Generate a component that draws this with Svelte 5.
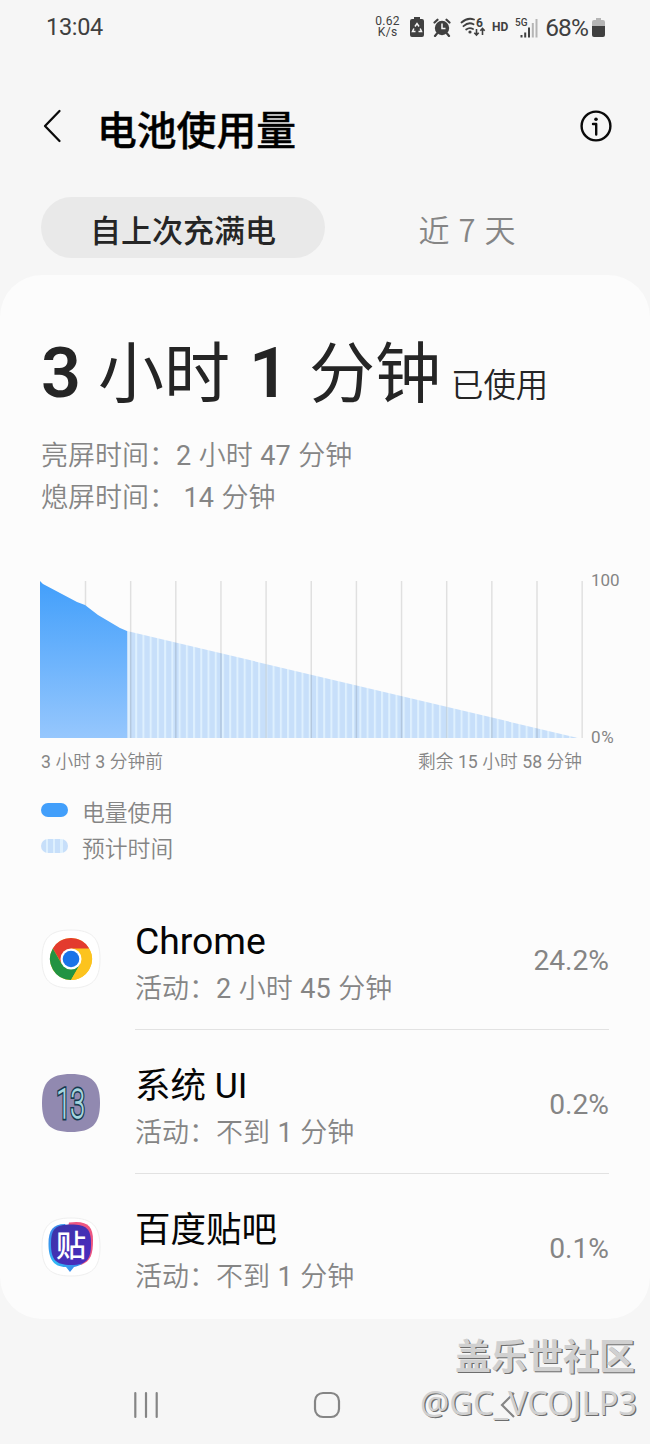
<script>
  const gridLines = Array.from({ length: 12 }, (_, i) => 45.5 + i * 45.15);
  const apps = [
    { id: 'chrome', name: 'Chrome', time: '活动：2 小时 45 分钟', share: '24.2%' },
    { id: 'system', name: '系统 UI', time: '活动：不到 1 分钟', share: '0.2%' },
    { id: 'tieba', name: '百度贴吧', time: '活动：不到 1 分钟', share: '0.1%' }
  ];
  const parts = (text) => text.split(/(\d+)/).filter(Boolean);
</script>

{#snippet mixed(text)}{#each parts(text) as part}<span class:digits={/^\d/.test(part)}>{part}</span>{/each}{/snippet}

<div class="screen">
  <header class="status">
    <span class="clock">13:04</span>
    <div class="indicators">
      <span class="rate"><span>0.62</span><span>K/s</span></span>
      <svg class="saver" width="14" height="20" viewBox="0 0 14 20">
        <path d="M4 0h6v2h2a2 2 0 0 1 2 2v14a2 2 0 0 1-2 2H2a2 2 0 0 1-2-2V4a2 2 0 0 1 2-2h2z" fill="#404040" />
        <path d="M5 9.500 7 6.500l2 3M10.200 11.500l1.300 3H8.500M5.500 14.500h-3l1.400-3" fill="none" stroke="#f6f6f6" stroke-width="1.500" />
      </svg>
      <svg class="alarm" width="18" height="19" viewBox="0 0 18 19">
        <circle cx="9" cy="10" r="7.200" fill="#404040" />
        <path d="M1.500 4.500 4.500 1.700M16.500 4.500 13.500 1.700M4 15.500 2 18M14 15.500l2 2.500" stroke="#404040" stroke-width="2.200" stroke-linecap="round" />
        <path d="M9 5.500V10.500H12.500" fill="none" stroke="#f6f6f6" stroke-width="1.500" />
      </svg>
      <svg class="wifi" width="27" height="20" viewBox="0 0 27 20">
        <g fill="none" stroke="#404040" stroke-width="1.800" stroke-linecap="round">
          <path d="M1.500 5.500Q7.500 0 14 2.500M3.500 9.200Q8.500 4.500 13.500 7.200M6.200 12.500Q9.500 10 13 12" />
        </g>
        <circle cx="10" cy="15" r="1.600" fill="#404040" />
        <text x="16" y="10" font-size="12" font-weight="700" fill="#404040">6</text>
        <path d="M16.500 12v6m-2.200-2.300 2.200 2.300 2.200-2.300M22.500 18v-6.500m-2.200 2.300 2.200-2.300 2.200 2.300" fill="none" stroke="#404040" stroke-width="1.600" />
      </svg>
      <span class="hd">HD</span>
      <svg class="signal" width="24" height="21" viewBox="0 0 24 21">
        <text x="0" y="8.500" font-size="10" font-weight="500" fill="#404040">5G</text>
        <path d="M6.500 18v2.500M10.200 15.500v5M14 10.500v10" stroke="#404040" stroke-width="2" />
        <path d="M17.800 6v14.500M21.500 2v18.500" stroke="#b5b5b5" stroke-width="2" />
      </svg>
      <span class="percent">68%</span>
      <svg class="battery" width="13" height="19" viewBox="0 0 13 19">
        <path d="M4 0h5v2h2a2 2 0 0 1 2 2v4H0V4a2 2 0 0 1 2-2h2z" fill="#b5b5b5" />
        <path d="M0 8h13v9a2 2 0 0 1-2 2H2a2 2 0 0 1-2-2z" fill="#404040" />
      </svg>
    </div>
  </header>

  <div class="titlebar">
    <svg class="back" width="20" height="34" viewBox="0 0 20 34">
      <path d="M17.500 2 3 17 17.500 32" fill="none" stroke="#0a0a0a" stroke-width="2.300" stroke-linecap="round" stroke-linejoin="round" />
    </svg>
    <h1>电池使用量</h1>
    <svg class="info" width="32" height="32" viewBox="0 0 32 32">
      <circle cx="16" cy="16" r="14.400" fill="none" stroke="#0a0a0a" stroke-width="2.400" />
      <circle cx="16" cy="9.300" r="1.800" fill="#0a0a0a" />
      <path d="M13 14h3.200v10.500" fill="none" stroke="#0a0a0a" stroke-width="2.400" stroke-linecap="round" stroke-linejoin="round" />
    </svg>
  </div>

  <nav class="tabs">
    <span class="tab active">自上次充满电</span>
    <span class="tab">近 7 天</span>
  </nav>

  <main class="card">
    <div class="total">
      <b>3</b><span class="unit">小时</span><b class="minutes">1</b><span class="unit">分钟</span><span class="used">已使用</span>
    </div>
    <p class="detail">{@render mixed('亮屏时间：2 小时 47 分钟')}</p>
    <p class="detail">{@render mixed('熄屏时间： 14 分钟')}</p>

    <div class="chart">
      <svg width="544" height="158" viewBox="0 0 544 158">
        <defs>
          <linearGradient id="usage" x1="0" y1="0" x2="0" y2="1">
            <stop offset="0" stop-color="#429ffb" />
            <stop offset="1" stop-color="#96c7fd" />
          </linearGradient>
          <pattern id="stripes" x="88" y="0" width="7.230" height="10" patternUnits="userSpaceOnUse">
            <rect width="7.230" height="10" fill="#c7dffa" />
            <rect width="2" height="10" fill="#def0fe" />
          </pattern>
        </defs>
        <polygon points="87,50 538,157 87,157" fill="url(#stripes)" />
        <g stroke="#000" stroke-opacity="0.110" stroke-width="1.500">
          {#each gridLines as x}
            <line x1={x} x2={x} y1="0" y2="157" />
          {/each}
        </g>
        <polygon points="0,0 3,3 37,21 45,24 58,34 80,47 87,50 87,157 0,157" fill="url(#usage)" />
      </svg>
      <div class="scale"><span>100</span><span class="zero">0%</span></div>
    </div>
    <div class="range">
      <div>{@render mixed('3 小时 3 分钟前')}</div>
      <div>{@render mixed('剩余 15 小时 58 分钟')}</div>
    </div>

    <div class="legend">
      <div><i class="solid"></i><span>电量使用</span></div>
      <div><i class="striped"></i><span>预计时间</span></div>
    </div>

    <div class="apps">
      {#each apps as app}
        <div class="app">
          <div class="icon">
            {#if app.id === 'chrome'}
              <svg width="60" height="60" viewBox="0 0 60 60">
                <path d="M30 1C51 1 59 9 59 30S51 59 30 59 1 51 1 30 9 1 30 1z" fill="#fff" stroke="#efefef" />
                <circle cx="30" cy="30" r="21" fill="#fcc31e" />
                <path d="M30 30 48.190 19.500A21 21 0 0 0 11.810 19.500L21 35z" fill="#e33b2e" />
                <path d="M11.810 19.500A21 21 0 0 0 30 51L39.100 35.250 30 30 20.900 35.250z" fill="#229342" />
                <path d="M30 19.500H48.190A21 21 0 0 1 30 51L39.100 35.250z" fill="#fcc31e" />
                <circle cx="30" cy="30" r="10.500" fill="#fff" />
                <circle cx="30" cy="30" r="8.300" fill="#1a73e8" />
              </svg>
            {:else if app.id === 'system'}
              <svg width="60" height="60" viewBox="0 0 60 60">
                <path d="M30 1C51 1 59 9 59 30S51 59 30 59 1 51 1 30 9 1 30 1z" fill="#9189b0" />
                <g class="thirteen" transform="translate(29.500 45) scale(0.640 1)">
                  <text stroke="#173a50" stroke-width="5">13</text>
                  <text stroke="#a5d4dd" stroke-width="1.700">13</text>
                </g>
              </svg>
            {:else}
              <svg width="60" height="60" viewBox="0 0 60 60">
                <defs>
                  <linearGradient id="violet" x1="0" y1="0" x2="1" y2="1">
                    <stop offset="0" stop-color="#3b35a8" />
                    <stop offset="1" stop-color="#4b2bc0" />
                  </linearGradient>
                  <linearGradient id="cyan" x1="0" y1="0" x2="1" y2="1">
                    <stop offset="0" stop-color="#3d7ee8" />
                    <stop offset="0.500" stop-color="#32b9f5" />
                    <stop offset="1" stop-color="#3e6de4" />
                  </linearGradient>
                </defs>
                <path d="M30 1C51 1 59 9 59 30S51 59 30 59 1 51 1 30 9 1 30 1z" fill="#fff" stroke="#efefef" />
                <path d="M28 5.500C46 3 52 9 52 23S50 44 40 48L20 43z" fill="#ee5681" />
                <path d="M7.500 27C7.500 13 12 7 24 7L46 39C44 46 39 49 33 50L29 55 25 50C12 50 7.500 41 7.500 27z" fill="url(#cyan)" />
                <path d="M30 7.500C46 7.500 50 12 50 27S46 48 30 48 10 42 10 27 14 7.500 30 7.500z" fill="url(#violet)" />
                <text class="tie" x="30" y="38.500" text-anchor="middle">贴</text>
              </svg>
            {/if}
          </div>
          <div class="body">
            <div class="copy">
              <span class="name" class:latin={app.id === 'chrome'}>{app.name}</span>
              <span class="time">{@render mixed(app.time)}</span>
            </div>
            <span class="share">{app.share}</span>
          </div>
        </div>
      {/each}
    </div>
  </main>

  <footer class="navigation">
    <svg width="28" height="28" viewBox="0 0 28 28"><path d="M3.300 2v24M14 2v24M24.700 2v24" stroke="#858585" stroke-width="2.200" stroke-linecap="round" /></svg>
    <svg width="28" height="28" viewBox="0 0 28 28"><rect x="2" y="2" width="24" height="24" rx="8" fill="none" stroke="#858585" stroke-width="2.200" /></svg>
    <svg width="28" height="28" viewBox="0 0 28 28"><path d="M20 2 8 14 20 26" fill="none" stroke="#858585" stroke-width="2.200" /></svg>
  </footer>

  <div class="watermark">
    <span class="community">盖乐世社区</span>
    <span class="handle">@GC_VCOJLP3</span>
  </div>
</div>

<style>
  :global(body) { margin: 0; background: #f6f6f6; }
  .screen {
    position: relative;
    width: 650px;
    height: 1444px;
    overflow: hidden;
    background: #f6f6f6;
    font-family: Roboto, "Noto Sans CJK SC", sans-serif;
    color: #252525;
    white-space: nowrap;
  }
  svg { display: block; flex: none; }
  .digits { font-weight: 400; }
  .status {
    display: flex;
    justify-content: space-between;
    align-items: center;
    height: 54px;
    padding: 0 45px;
    box-sizing: border-box;
    color: #404040;
  }
  .clock { font-size: 23.500px; line-height: 54px; margin-left: 1px; letter-spacing: -0.3px; }
  .indicators { display: flex; align-items: center; }
  .rate { display: flex; flex-direction: column; align-items: center; font-size: 12px; line-height: 11.500px; letter-spacing: 0.3px; }
  .saver { margin-left: 10px; }
  .alarm { margin-left: 9px; }
  .wifi { margin-left: 9px; }
  .hd { margin-left: 5px; font-size: 12px; font-weight: 700; }
  .signal { margin-left: 7px; }
  .percent { margin-left: 6px; font-size: 24.500px; letter-spacing: -0.900px; }
  .battery { margin-left: 4px; }

  .titlebar { display: flex; align-items: center; height: 144px; padding: 0 38px 0 42px; box-sizing: border-box; }
  h1 { flex: 1; margin: 11px 0 0 35px; font-size: 39.800px; line-height: 50px; font-weight: 500; color: #000; -webkit-text-stroke: 0.400px #000; }

  .tabs { display: flex; height: 77px; padding: 0 41px; margin-top: -1px; }
  .tab {
    width: 284px;
    height: 61px;
    line-height: 63px;
    text-align: center;
    font-size: 31px;
    font-family: "Noto Sans CJK SC", sans-serif;
    font-weight: 350;
    word-spacing: 2px;
    color: #858585;
    border-radius: 31px;
  }
  .tab.active { background: #e9e9e9; color: #252525; font-weight: 500; }

  .card { height: 1044px; margin-top: 1px; padding: 0 41px; background: #fcfcfc; border-radius: 42px; box-sizing: border-box; }
  .total { display: flex; align-items: baseline; height: 160px; padding-top: 48px; box-sizing: border-box; line-height: 100px; }
  .total b { width: 57px; font-size: 70px; font-weight: 600; }
  .total .minutes { width: 79px; padding-left: 19px; box-sizing: border-box; }
  .unit { font-size: 66px; }
  .used { font-size: 32.400px; font-weight: 350; margin-left: 10px; }
  .detail { margin: 0; font-size: 27px; line-height: 42px; color: #858585; font-weight: 350; word-spacing: 1px; }

  .chart { display: flex; margin: 62px 0 0 -1px; height: 158px; }
  .scale { display: flex; flex-direction: column; justify-content: space-between; margin: -11px 0 -8px 7px; font-size: 17px; line-height: 20px; letter-spacing: 0; color: #858585; }
  .zero { letter-spacing: 0.800px; }
  .range { display: flex; justify-content: space-between; width: 541px; height: 44px; line-height: 46px; font-size: 17.700px; font-weight: 350; word-spacing: 0.200px; color: #858585; }

  .legend { margin-top: 11px; color: #858585; font-size: 22.800px; font-weight: 350; line-height: 36px; }
  .legend div { display: flex; align-items: center; height: 36px; }
  .legend span { padding-top: 3px; }
  .legend i { width: 27px; height: 14px; border-radius: 7px; margin: -5px 14px 0 0; }
  .solid { background: #429ffb; }
  .striped { background: repeating-linear-gradient(90deg, #c7dffa 0 5px, #def0fe 5px 7.200px); }

  .apps { margin-top: 20px; }
  .app { display: flex; height: 144.200px; }
  .icon { width: 94px; padding-top: 42.500px; box-sizing: border-box; }
  .body { display: flex; flex: 1; border-bottom: 1.500px solid #e2e2e2; box-sizing: border-box; }
  .app:last-child .body { border: 0; }
  .copy { flex: 1; display: flex; flex-direction: column; padding-top: 31px; }
  .name { font-size: 35.500px; line-height: 50px; color: #050505; }
  .name.latin { font-size: 37.300px; line-height: 48px; margin-bottom: 2px; }
  .time { font-size: 27px; line-height: 44px; color: #858585; font-weight: 350; word-spacing: 1px; }
  .share { margin-top: 58px; font-size: 28.200px; line-height: 34px; color: #858585; }
  .thirteen text { font: 100 40px Roboto, sans-serif; text-anchor: middle; fill: none; }
  .tie { font: 500 30px "Noto Sans CJK SC", sans-serif; fill: #fff; }

  .navigation { display: flex; justify-content: space-between; align-items: center; height: 125px; padding: 47px 128px 0 132px; box-sizing: border-box; }
  .watermark { position: absolute; right: 13px; top: 1327px; display: flex; flex-direction: column; align-items: flex-end; color: #d0d0d0; text-shadow: 1.200px 1.400px 0 #6d6d6d; }
  .community { font: 700 36px/54px "Noto Sans CJK SC", sans-serif; margin-right: 2px; }
  .handle { font: 400 32.600px/44px "Noto Sans", sans-serif; }
</style>
